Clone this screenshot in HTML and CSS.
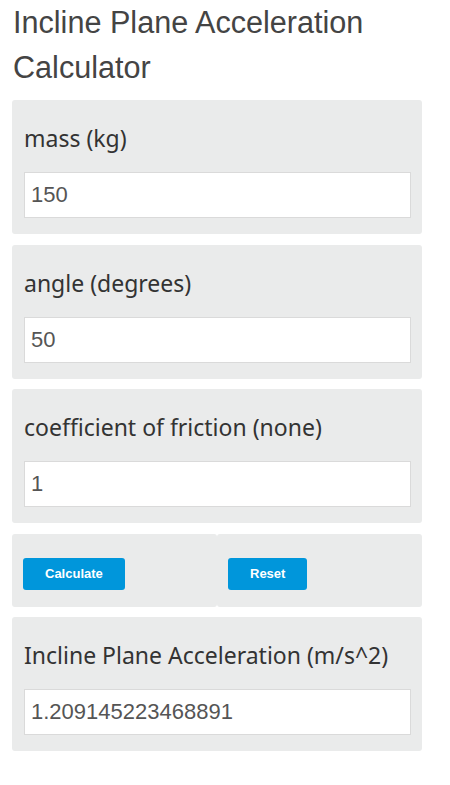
FILE: index.html
```html
<!DOCTYPE html>
<html>
<head>
    <title>Incline Plane Acceleration Calculator</title>
    <meta charset="utf-8">
    <meta name="viewport" content="width=device-width, initial-scale=1">
    <link rel="stylesheet" href="styles.css">
</head>
<body>
    <h1>Incline Plane Acceleration Calculator</h1>

    <form class="calc" id="calc-form">
        <div class="field">
            <label for="mass">mass (kg)</label>
            <input type="text" id="mass" value="150">
        </div>
        <div class="field">
            <label for="angle">angle (degrees)</label>
            <input type="text" id="angle" value="50">
        </div>
        <div class="field">
            <label for="friction">coefficient of friction (none)</label>
            <input type="text" id="friction" value="1">
        </div>
        <div class="actions">
            <div class="cell"><button type="button" class="btn">Calculate</button></div>
            <div class="cell"><button type="reset" class="btn">Reset</button></div>
        </div>
        <div class="field">
            <label for="result">Incline Plane Acceleration (m/s^2)</label>
            <input type="text" id="result" value="1.209145223468891">
        </div>
    </form>
</body>
</html>
```

FILE: styles.css
```css
body {
    font-family: "Liberation Sans", Arial, sans-serif;
    color: #333;
    margin: 0;
    padding: 0 12px;
    width: 410px;
    background-color: #fff;
}
h1 {
    font-weight: normal;
    font-size: 30.6px;
    line-height: 45px;
    color: #444;
    margin: 0 0 10px 1px;
}
.calc {
    display: flex;
    flex-direction: column;
    gap: 10.5px;
}
.field {
    background-color: #eaebeb;
    border-radius: 3px;
    padding: 24px 11px 16px 12px;
}
.field label {
    display: block;
    font-family: "Noto Sans", "Open Sans", sans-serif;
    font-size: 23px;
    line-height: 28px;
    color: #333;
    margin-bottom: 20px;
}
.field input {
    display: block;
    box-sizing: border-box;
    width: 100%;
    height: 46px;
    padding: 0 6px;
    border: 1px solid #dadada;
    background-color: #fff;
    font-family: "Liberation Sans", Arial, sans-serif;
    font-size: 22px;
    color: #555;
}
.actions {
    display: flex;
}
.cell {
    flex: 1;
    background-color: #eaebeb;
    border-radius: 3px;
    padding: 24px 10px 17px 11px;
}
.btn {
    height: 32px;
    padding: 0 22px;
    border: none;
    border-radius: 3px;
    background-color: #0096db;
    color: #fff;
    font-family: "Liberation Sans", Arial, sans-serif;
    font-weight: bold;
    font-size: 13px;
    cursor: pointer;
}
```
